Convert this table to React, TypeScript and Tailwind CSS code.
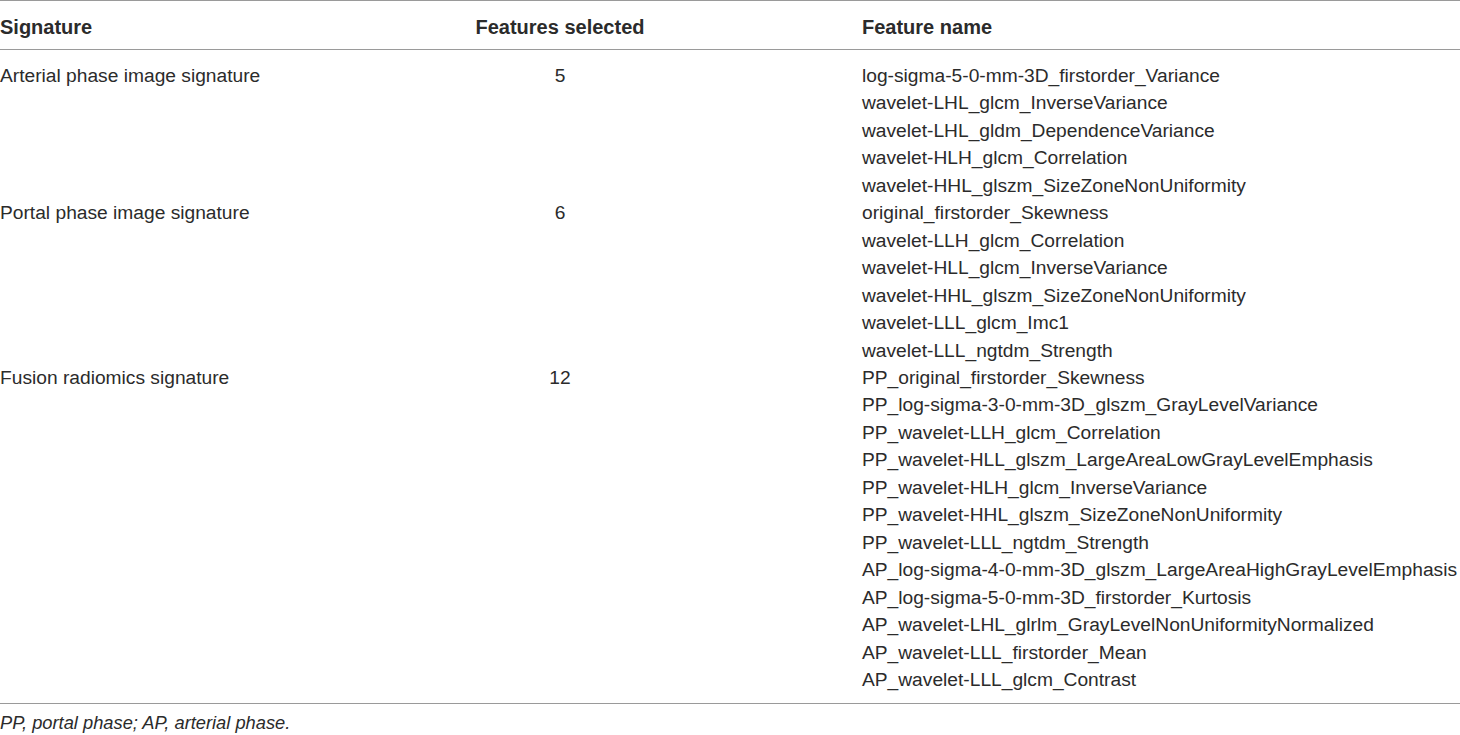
import React from "react";

const groups = [
    {
        name: "Arterial phase image signature",
        count: 5,
        features: [
            "log-sigma-5-0-mm-3D_firstorder_Variance",
            "wavelet-LHL_glcm_InverseVariance",
            "wavelet-LHL_gldm_DependenceVariance",
            "wavelet-HLH_glcm_Correlation",
            "wavelet-HHL_glszm_SizeZoneNonUniformity",
        ],
    },
    {
        name: "Portal phase image signature",
        count: 6,
        features: [
            "original_firstorder_Skewness",
            "wavelet-LLH_glcm_Correlation",
            "wavelet-HLL_glcm_InverseVariance",
            "wavelet-HHL_glszm_SizeZoneNonUniformity",
            "wavelet-LLL_glcm_Imc1",
            "wavelet-LLL_ngtdm_Strength",
        ],
    },
    {
        name: "Fusion radiomics signature",
        count: 12,
        features: [
            "PP_original_firstorder_Skewness",
            "PP_log-sigma-3-0-mm-3D_glszm_GrayLevelVariance",
            "PP_wavelet-LLH_glcm_Correlation",
            "PP_wavelet-HLL_glszm_LargeAreaLowGrayLevelEmphasis",
            "PP_wavelet-HLH_glcm_InverseVariance",
            "PP_wavelet-HHL_glszm_SizeZoneNonUniformity",
            "PP_wavelet-LLL_ngtdm_Strength",
            "AP_log-sigma-4-0-mm-3D_glszm_LargeAreaHighGrayLevelEmphasis",
            "AP_log-sigma-5-0-mm-3D_firstorder_Kurtosis",
            "AP_wavelet-LHL_glrlm_GrayLevelNonUniformityNormalized",
            "AP_wavelet-LLL_firstorder_Mean",
            "AP_wavelet-LLL_glcm_Contrast",
        ],
    },
];

export default function App() {
    return (
        <div
            className="w-[1460px] h-[735px] bg-white text-[#2b2b2b] text-[19.2px] overflow-hidden"
            style={{ fontFamily: '"Liberation Sans", Arial, sans-serif' }}
        >
            <div className="border-t-[1.5px] border-[#9a9a9a]" />
            <div className="flex h-[49px] pt-[4px] items-center font-bold text-[20px] border-b-[1.5px] border-[#9a9a9a]">
                <div className="w-[474px]">Signature</div>
                <div className="w-[172px] text-center whitespace-nowrap">Features selected</div>
                <div className="ml-[216px]">Feature name</div>
            </div>
            <div className="pt-[12px] pb-[10px] border-b-[1.5px] border-[#9a9a9a]">
                {groups.map((g) => (
                    <div key={g.name} className="flex leading-[27.45px]">
                        <div className="w-[474px]">{g.name}</div>
                        <div className="w-[172px] text-center">{g.count}</div>
                        <div className="ml-[216px] flex flex-col whitespace-nowrap">
                            {g.features.map((f) => (
                                <span key={f}>{f}</span>
                            ))}
                        </div>
                    </div>
                ))}
            </div>
            <div className="italic text-[18.3px] pt-[8px] leading-[22px]">PP, portal phase; AP, arterial phase.</div>
        </div>
    );
}
